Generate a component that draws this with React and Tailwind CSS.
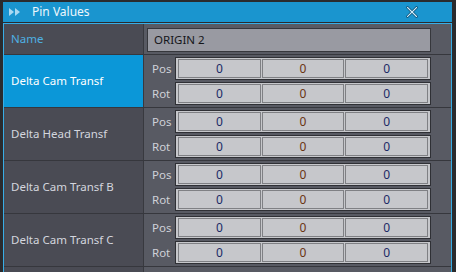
import React from 'react';

// Pin values panel: name field + per-pin Pos/Rot vector rows
const ROWS = [
    { label: 'Delta Cam Transf', selected: true },
    { label: 'Delta Head Transf' },
    { label: 'Delta Cam Transf B' },
    { label: 'Delta Cam Transf C' },
];

const FONT = { fontFamily: '"Noto Sans", "Open Sans", "DejaVu Sans", sans-serif' };

const Cell = ({ value, mid }) => (
    <div
        className={`flex-1 h-full border border-[#7f8084] bg-[#c6c7cb] flex items-center justify-center text-[12px] leading-none ${mid ? 'text-[#6a3412]' : 'text-[#1b2a66]'}`}
    >
        {value}
    </div>
);

const VecField = ({ label }) => (
    <div className="flex items-center h-[23px]">
        <span className="w-[23px] text-[11.5px] text-[#cfd1d8] leading-none">{label}</span>
        <div className="flex-1 h-[23px] border border-[#2f3035] bg-[#c6c7cb] px-[2px] py-[1px] flex gap-[1px]">
            <Cell value="0" />
            <Cell value="0" mid />
            <Cell value="0" />
        </div>
    </div>
);

const App = () => {
    return (
        <div className="w-[456px] h-[272px] overflow-hidden bg-[#2a2b2e] pt-[2px] pl-[3px] pr-[4px]" style={FONT}>
            {/* Title bar */}
            <div className="h-[20px] bg-[#1a95cf] flex items-center">
                <svg width="12" height="8" viewBox="0 0 12 8" className="ml-[6px]">
                    <polygon points="0,0 5,4 0,8" fill="#a9d9f2" />
                    <polygon points="6,0 11,4 6,8" fill="#a9d9f2" />
                </svg>
                <span className="ml-[11px] text-[12px] text-[#eef7fc] leading-none">Pin Values</span>
                <svg width="12" height="12" viewBox="0 0 12 12" className="ml-auto mr-[34px]">
                    <path d="M1.5 1.5 L10.5 10.5 M10.5 1.5 L1.5 10.5" stroke="#0b4f74" strokeWidth="2.6" strokeLinecap="square" />
                    <path d="M1.5 1.5 L10.5 10.5 M10.5 1.5 L1.5 10.5" stroke="#d4f0ff" strokeWidth="1.1" strokeLinecap="square" />
                </svg>
            </div>

            {/* Panel */}
            <div className="mt-[1px] border-l border-t border-r border-[#38ade5] h-[260px] bg-[#585a63]">
                {/* Name row */}
                <div className="flex h-[31px] border-b border-[#36373d]">
                    <div className="w-[139px] bg-[#4a4b54] flex items-center pl-[7px] text-[11.5px] text-[#4eb0e2]">
                        Name
                    </div>
                    <div className="flex-1 border-l border-[#38393f] bg-[#585a63] pl-[3px] pr-[20px] pt-[4px]">
                        <div className="h-[24px] border border-[#36373c] bg-[#999aa2] flex items-center px-[6px] text-[11.5px] text-[#15161a]">
                            ORIGIN 2
                        </div>
                    </div>
                </div>

                {ROWS.map((row) => (
                    <div key={row.label} className="flex h-[53px] border-b border-[#36373d]">
                        <div
                            className={`w-[139px] flex items-center pl-[7px] text-[11.5px] ${row.selected ? 'bg-[#0b97d8] text-white' : 'bg-[#4a4b54] text-[#d4d6de]'}`}
                        >
                            {row.label}
                        </div>
                        <div className="flex-1 border-l border-[#38393f] bg-[#585a63] pl-[8px] pr-[20px] py-[2px] flex flex-col gap-[2px]">
                            <VecField label="Pos" />
                            <VecField label="Rot" />
                        </div>
                    </div>
                ))}

                {/* Next row, cut off */}
                <div className="flex h-[20px]">
                    <div className="w-[139px] bg-[#4a4b54]" />
                    <div className="flex-1 border-l border-[#38393f] bg-[#585a63]" />
                </div>
            </div>
        </div>
    );
};

export default App;
